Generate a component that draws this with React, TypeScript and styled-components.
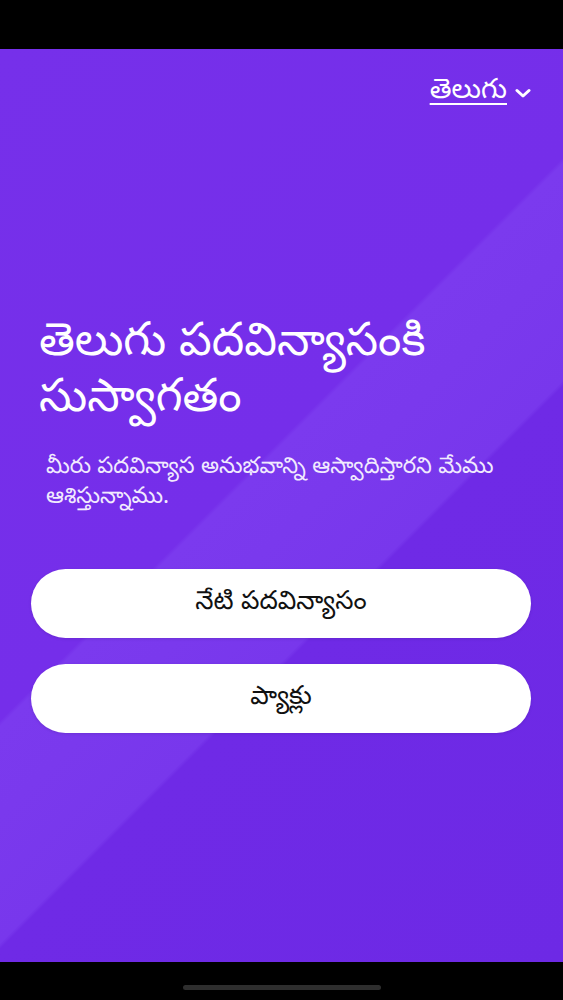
import React from "react";
import styled, { createGlobalStyle } from "styled-components";

const GlobalStyle = createGlobalStyle`
  html, body {
    margin: 0;
    padding: 0;
    background: #000;
  }
  body {
    font-family: "Noto Sans Telugu", "Noto Sans", "DejaVu Sans", sans-serif;
  }
`;

const Screen = styled.div`
  display: flex;
  flex-direction: column;
  width: 563px;
  height: 1000px;
  background: #000;
`;

const StatusBar = styled.div`
  height: 49px;
  flex-shrink: 0;
  background: #000;
`;

const Main = styled.main`
  flex: 1;
  display: flex;
  flex-direction: column;
  padding: 0 32px 0 31px;
  background: linear-gradient(
    135deg,
    #7630ea 0%,
    #752eea 45.5%,
    #7b3aee 45.9%,
    #7a39ed 52%,
    #7837ec 60.6%,
    #6f2ae6 61%,
    #6d29e5 100%
  );
`;

const TopRow = styled.div`
  display: flex;
  justify-content: flex-end;
  padding-top: 24px;
`;

const LangButton = styled.button`
  display: flex;
  align-items: center;
  gap: 8px;
  padding: 0;
  border: none;
  background: none;
  color: #fff;
  font-family: inherit;
  font-size: 28px;
  line-height: 40px;
  cursor: pointer;
`;

const LangLabel = styled.span`
  text-decoration: underline;
  text-decoration-thickness: 1.5px;
  text-underline-offset: 5px;
`;

const Hero = styled.section`
  margin-top: 205px;
  padding-left: 8px;
`;

const Title = styled.h1`
  margin: 0;
  color: #fff;
  font-size: 46px;
  font-weight: 400;
  line-height: 56px;
`;

const Subtitle = styled.p`
  margin: 24px 0 0 7px;
  color: #f1eafe;
  font-size: 22.5px;
  line-height: 30px;
`;

const Actions = styled.div`
  display: flex;
  flex-direction: column;
  gap: 26px;
  margin-top: 55px;
`;

const PillButton = styled.button`
  height: 69px;
  width: 100%;
  border: none;
  border-radius: 35px;
  background: #fff;
  color: #111;
  font-family: inherit;
  font-size: 26px;
  box-shadow: 0 1px 3px rgba(40, 0, 90, 0.15);
  cursor: pointer;
`;

const HomeBar = styled.div`
  height: 38px;
  flex-shrink: 0;
  display: flex;
  justify-content: center;
  align-items: flex-start;
  background: #000;
`;

const Indicator = styled.div`
  margin-top: 23px;
  width: 198px;
  height: 5px;
  border-radius: 3px;
  background: #2e2e2e;
`;

const Chevron = () => (
  <svg width="16" height="10" viewBox="0 0 16 10" fill="none">
    <path
      d="M2 2.5 L8 8 L14 2.5"
      stroke="#fff"
      strokeWidth="3"
      strokeLinecap="round"
      strokeLinejoin="round"
    />
  </svg>
);

const App: React.FC = () => {
  return (
    <Screen>
      <GlobalStyle />
      <StatusBar />
      <Main>
        <TopRow>
          <LangButton>
            <LangLabel>తెలుగు</LangLabel>
            <Chevron />
          </LangButton>
        </TopRow>
        <Hero>
          <Title>
            తెలుగు పదవిన్యాసంకి
            <br />
            సుస్వాగతం
          </Title>
          <Subtitle>
            మీరు పదవిన్యాస అనుభవాన్ని ఆస్వాదిస్తారని మేము ఆశిస్తున్నాము.
          </Subtitle>
        </Hero>
        <Actions>
          <PillButton>నేటి పదవిన్యాసం</PillButton>
          <PillButton>ప్యాక్లు</PillButton>
        </Actions>
      </Main>
      <HomeBar>
        <Indicator />
      </HomeBar>
    </Screen>
  );
};

export default App;
